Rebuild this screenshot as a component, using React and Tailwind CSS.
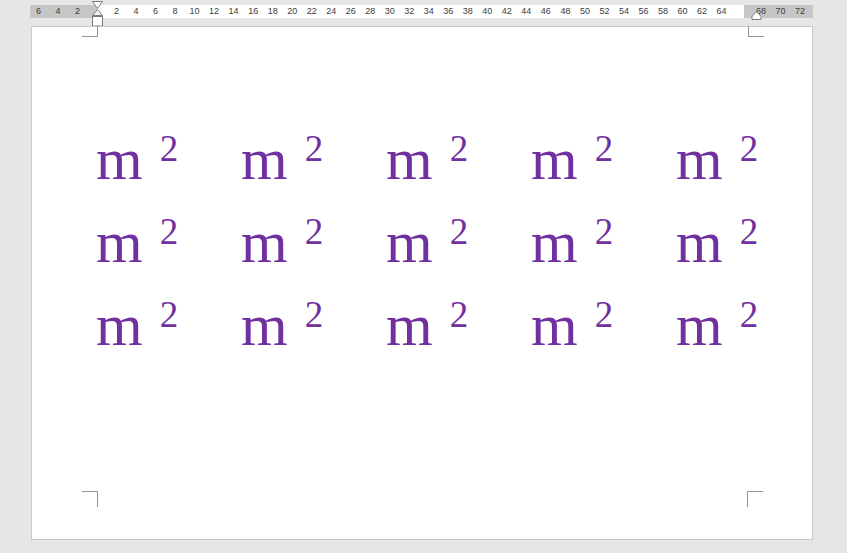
import React from "react";

const left = ["6", "4", "2"];
const mid = Array.from({ length: 32 }, (_, i) => String((i + 1) * 2));
const right = ["68", "70", "72"];

function Tick({ n }) {
  return (
    <span className="w-[19.53px] shrink-0 text-center leading-[13px]">{n}</span>
  );
}

function Cell() {
  return (
    <div className="whitespace-nowrap">
      m <span className="ml-[2px] text-[37px] leading-none align-[18px]">2</span>
    </div>
  );
}

export default function App() {
  const cells = Array.from({ length: 15 });

  return (
    <div className="w-[847px] h-[553px] bg-[#e6e6e6] pt-[5px] relative overflow-hidden">
      {/* ruler */}
      <div
        className="ml-[30px] w-[783px] h-[13px] flex text-[9px] text-[#3c3c3c]"
        style={{ fontFamily: '"Liberation Sans", Arial, sans-serif' }}
      >
        <div className="w-[67px] bg-[#c6c6c6] flex justify-end pr-[9.77px]">
          {left.map((n) => (
            <Tick key={n} n={n} />
          ))}
        </div>
        <div className="w-[647px] bg-white flex pl-[9.77px]">
          {mid.map((n) => (
            <Tick key={n} n={n} />
          ))}
        </div>
        <div className="flex-1 bg-[#c6c6c6] flex pl-[7.2px]">
          {right.map((n) => (
            <Tick key={n} n={n} />
          ))}
        </div>
      </div>

      {/* indent markers */}
      <svg className="absolute left-[92px] top-[1px]" width="12" height="26" viewBox="0 0 12 26">
        <path d="M0.5 0.5H10.5L5.5 7.5Z" fill="#fff" stroke="#7a7a7a" />
        <path d="M5.5 8.5L10.5 14.5H0.5Z" fill="#f4f4f4" stroke="#7a7a7a" />
        <rect x="0.5" y="15.5" width="10" height="9.5" fill="#fff" stroke="#7a7a7a" />
      </svg>
      <svg className="absolute left-[751px] top-[11px]" width="12" height="10" viewBox="0 0 12 10">
        <path d="M5.5 0.8L10 5.3V8.5H1V5.3Z" fill="#fff" stroke="#7a7a7a" />
      </svg>

      {/* page */}
      <div className="mt-[8px] ml-[31px] w-[782px] h-[514px] bg-white border border-[#c9c9c9] relative">
        <div className="absolute left-[50px] top-[-1px] w-[16px] h-[11px] border-r border-b border-[#8d9b8d]" />
        <div className="absolute left-[716px] top-[-1px] w-[16px] h-[11px] border-l border-b border-[#8d9b8d]" />
        <div className="absolute left-[50px] top-[464px] w-[16px] h-[16px] border-r border-t border-[#8d9b8d]" />
        <div className="absolute left-[715px] top-[464px] w-[16px] h-[16px] border-l border-t border-[#8d9b8d]" />

        <div
          className="pt-[91px] pl-[64px] grid grid-cols-[repeat(5,145px)] text-[60px] leading-[83px] text-[#7030a0]"
          style={{ fontFamily: '"Liberation Serif", "Times New Roman", serif' }}
        >
          {cells.map((_, i) => (
            <Cell key={i} />
          ))}
        </div>
      </div>
    </div>
  );
}
